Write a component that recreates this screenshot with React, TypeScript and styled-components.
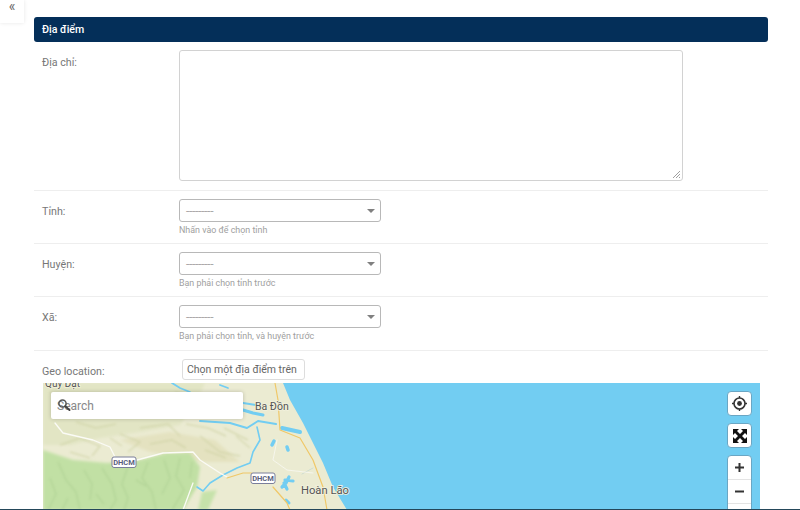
import React from "react";
import styled, { createGlobalStyle } from "styled-components";

const Global = createGlobalStyle`
  html, body { margin: 0; padding: 0; background: #fff; height: 510px; overflow: hidden; }
  body { font-family: Roboto, "Noto Sans", sans-serif; }
  * { box-sizing: border-box; }
`;

const Page = styled.div`
  position: relative;
  width: 800px;
  height: 510px;
  overflow: hidden;
  padding: 17px 32px 0 34px;
  &::after {
    content: "";
    position: absolute;
    left: 0;
    right: 0;
    bottom: 0;
    height: 1px;
    background: #24475a;
  }
`;

const Collapse = styled.div`
  position: absolute;
  left: 0;
  top: 0;
  width: 24px;
  height: 23px;
  background: #fff;
  box-shadow: 0 0 4px rgba(0, 0, 0, 0.1);
  color: #666;
  font-size: 14px;
  line-height: 12px;
  text-align: center;
`;

const SectionTitle = styled.h2`
  margin: 0;
  height: 25px;
  background: #042f59;
  color: #fff;
  border-radius: 3px;
  padding: 0 8px;
  font-size: 10.6px;
  font-weight: 500;
  line-height: 25px;
`;

const Row = styled.div<{ $h: number }>`
  display: flex;
  height: ${(p) => p.$h}px;
  padding-top: 8px;
  border-bottom: 1px solid #eee;
`;

const GeoRow = styled.div`
  display: flex;
  height: 32px;
  padding-top: 8px;
`;

const Label = styled.label`
  width: 137px;
  margin-left: 8px;
  padding-top: 6px;
  font-size: 10.7px;
  line-height: 14px;
  color: #777;
  flex: none;
`;

const Field = styled.div`
  display: flex;
  flex-direction: column;
`;

const TextArea = styled.div`
  position: relative;
  width: 504px;
  height: 131px;
  border: 1px solid #d2d2d2;
  border-radius: 3px;
`;

const Grip = styled.svg`
  position: absolute;
  right: 1px;
  bottom: 1px;
`;

const Select = styled.div`
  display: flex;
  align-items: center;
  justify-content: space-between;
  width: 202px;
  height: 23px;
  padding: 0 5px 0 6px;
  border: 1px solid #b8b8b8;
  border-radius: 3px;
  font-size: 12px;
  letter-spacing: -0.3px;
  color: #aaa;
`;

const Caret = styled.span`
  width: 0;
  height: 0;
  border-left: 4px solid transparent;
  border-right: 4px solid transparent;
  border-top: 4px solid #808080;
`;

const Help = styled.div`
  margin-top: 2px;
  font-size: 8.9px;
  line-height: 12px;
  color: #a0a0a0;
`;

const PickButton = styled.div`
  margin-left: 3px;
  height: 21px;
  padding: 0 7px 0 4px;
  border: 1px solid #ddd;
  border-radius: 3px;
  font-size: 10.5px;
  line-height: 19px;
  color: #666;
  white-space: nowrap;
`;

const MapFrame = styled.div`
  position: relative;
  width: 717px;
  height: 127px;
  margin-left: 9px;
  overflow: hidden;
  background: #72cdf2;
`;

const MapArt = styled.svg`
  display: block;
`;

const PlaceName = styled.text<{ $size: number }>`
  font-family: Roboto, sans-serif;
  font-size: ${(p) => p.$size}px;
  fill: #555;
  stroke: #f2f1dd;
  stroke-width: 1.6px;
  paint-order: stroke;
`;

const ShieldText = styled.text`
  font-family: Roboto, sans-serif;
  font-size: 7.5px;
  font-weight: 700;
  fill: #5a5f7c;
  text-anchor: middle;
`;

const SearchBox = styled.div`
  position: absolute;
  left: 8px;
  top: 9px;
  width: 192px;
  height: 27px;
  background: #fff;
  border-radius: 2px;
  box-shadow: 0 0 4px rgba(0, 0, 0, 0.2);
  padding-left: 6px;
  font-size: 12px;
  line-height: 28px;
  color: #888;
`;

const SearchIcon = styled.svg`
  position: absolute;
  left: 6px;
  top: 6px;
`;

const Control = styled.div<{ $top: number }>`
  position: absolute;
  left: 684px;
  top: ${(p) => p.$top}px;
  width: 25px;
  height: 25px;
  display: flex;
  align-items: center;
  justify-content: center;
  background: #fff;
  border: 1px solid #6aa6c4;
  border-radius: 4px;
`;

const ZoomStack = styled.div`
  position: absolute;
  left: 684px;
  top: 72px;
  width: 25px;
  height: 70px;
  background: #fff;
  border: 1px solid #6aa6c4;
  border-radius: 4px;
`;

const ZoomBtn = styled.div`
  height: 24px;
  display: flex;
  align-items: center;
  justify-content: center;
  border-bottom: 1px solid #e4e4e4;
`;

function MapDrawing() {
  return (
    <MapArt width="717" height="127" viewBox="43 383 717 127">
      <defs>
        <filter id="soft"><feGaussianBlur stdDeviation="1.8" /></filter>
        <filter id="mid"><feGaussianBlur stdDeviation="1.1" /></filter>
        <filter id="blur"><feGaussianBlur stdDeviation="0.35" /></filter>
      </defs>
      <rect x="43" y="383" width="717" height="127" fill="#72cdf2" />
      <path d="M43 383H283L290 400L303 423L313 443L323 463L333 487L347 510H43Z" fill="#ebebd2" />
      <path d="M43 383H205L195 405L180 425L140 432L100 438L70 445L43 445Z" fill="#e2e5c4" filter="url(#soft)" />
      <path d="M120 440L170 432L215 440L240 462L205 462L150 452Z" fill="#e4e2c0" filter="url(#soft)" />
      <path d="M43 450L73 460L107 463L140 460L167 453L190 453L200 467L197 487L183 510H43Z" fill="#c1e0a4" filter="url(#soft)" />
      <path d="M198 510L202 492L217 490L208 510Z" fill="#c6e2aa" filter="url(#soft)" />
      <g fill="none" stroke="#a8cb8e" strokeWidth="1.5" filter="url(#mid)" opacity="0.5">
        <path d="M58 462L66 480L76 492L80 510M84 470L92 484L90 500M102 468L112 484L116 500L110 510M128 466L122 484L128 498L124 510M148 462L142 478L152 492L156 510M164 460L170 478L162 494M180 458L176 476L184 490L172 510M192 462L190 478M50 478L56 494L48 510M136 480L146 486M96 494L104 504M68 498L62 510" />
      </g>
      <g fill="none" stroke="#cacf9f" strokeWidth="1.5" filter="url(#mid)" opacity="0.6">
        <path d="M50 392L62 402L56 418M76 422L96 428L116 424M60 445L80 438L100 446L92 456M120 434L140 442L128 452M140 428L168 424L180 436M150 444L172 440L186 448M186 424L208 428L226 436M200 436L220 452L240 456M224 428L248 440M236 436L250 448M205 450L226 458M175 392L196 398M70 452L90 458M110 438L122 446" />
      </g>
      {/* rivers */}
      <g fill="none" stroke="#72cdf2" strokeLinecap="round" strokeLinejoin="round" filter="url(#blur)">
        <path d="M172 383L180 388L190 392M220 385L228 388" strokeWidth="1.8" />
        <path d="M243 403L256 405" strokeWidth="2" />
        <path d="M243 410L253 413L263 415" strokeWidth="3" />
        <path d="M200 421L230 423L247 428L258 421L276 424" strokeWidth="2" />
        <path d="M257 427L260 440L253 452L250 463L237 468L223 475L210 483L203 491L197 487" strokeWidth="1.6" />
        <path d="M282 428L300 432" strokeWidth="4" />
        <path d="M274 441L272 445M287 447L288 450" strokeWidth="3.5" />
        <path d="M289 477L286 483L282 487M285 480L293 481M284 483L287 489" strokeWidth="3.2" />
        <path d="M286 500L289 503" strokeWidth="3" />
        <path d="M313 468L302 474" strokeWidth="1" stroke="#cfdcd0" />
      </g>
      {/* roads */}
      <g fill="none" strokeLinecap="round" strokeLinejoin="round" filter="url(#blur)">
        <path d="M55 423L63 433L93 440L110 447L115 457M137 460L163 453L193 452L200 460L220 473L227 477M193 483L183 510" stroke="#fbfbf6" strokeWidth="1.3" />
        <path d="M277 440L273 460L287 470L313 473" stroke="#f6f6ec" strokeWidth="1" />
        <path d="M275 383L278 400L280 430L300 438L313 460L323 487L327 510" stroke="#f0c868" strokeWidth="1.2" />
        <path d="M227 478L243 473L252 473" stroke="#f0c868" strokeWidth="1.2" />
        <path d="M273 487L287 503L290 510" stroke="#f0c868" strokeWidth="1.2" />
      </g>
      <PlaceName x="45" y="387" $size={10}>Quy Đạt</PlaceName>
      <PlaceName x="255" y="410" $size={10.5}>Ba Đồn</PlaceName>
      <PlaceName x="301" y="494" $size={11.2}>Hoàn Lão</PlaceName>
      <rect x="112" y="457" width="24" height="10.5" rx="2" fill="#fff" stroke="#7a7e9a" strokeWidth="1" />
      <ShieldText x="124" y="465">DHCM</ShieldText>
      <rect x="251" y="473" width="24" height="10.5" rx="2" fill="#fff" stroke="#7a7e9a" strokeWidth="1" />
      <ShieldText x="263" y="481">DHCM</ShieldText>
    </MapArt>
  );
}

export default function App() {
  const rows = [
    { label: "Tỉnh:", help: "Nhấn vào để chọn tỉnh", h: 53 },
    { label: "Huyện:", help: "Bạn phải chọn tỉnh trước", h: 53 },
    { label: "Xã:", help: "Bạn phải chọn tỉnh, và huyện trước", h: 54 },
  ];
  return (
    <Page>
      <Global />
      <Collapse>«</Collapse>
      <SectionTitle>Địa điểm</SectionTitle>
      <Row $h={149}>
        <Label>Địa chỉ:</Label>
        <Field>
          <TextArea>
            <Grip width="11" height="11" viewBox="0 0 11 11">
              <path d="M3 10L10 3M6 10L10 6M9 10L10 9" stroke="#888" strokeWidth="0.8" fill="none" />
            </Grip>
          </TextArea>
        </Field>
      </Row>
      {rows.map((r) => (
        <Row $h={r.h} key={r.label}>
          <Label>{r.label}</Label>
          <Field>
            <Select>
              <span>---------</span>
              <Caret />
            </Select>
            <Help>{r.help}</Help>
          </Field>
        </Row>
      ))}
      <GeoRow>
        <Label>Geo location:</Label>
        <PickButton>Chọn một địa điểm trên</PickButton>
      </GeoRow>
      <MapFrame>
        <MapDrawing />
        <SearchBox>
          Search
          <SearchIcon width="14" height="14" viewBox="0 0 14 14">
            <circle cx="5.5" cy="5.5" r="3.6" fill="none" stroke="#555" strokeWidth="1.5" />
            <path d="M8.2 8.2L12.5 12" stroke="#444" strokeWidth="2" strokeLinecap="round" />
          </SearchIcon>
        </SearchBox>
        <Control $top={8}>
          <svg width="17" height="17" viewBox="0 0 17 17">
            <circle cx="8.5" cy="8.5" r="5.5" fill="none" stroke="#333" strokeWidth="1.6" />
            <circle cx="8.5" cy="8.5" r="2.4" fill="#333" />
            <path d="M8.5 1V3M8.5 14V16M1 8.5H3M14 8.5H16" stroke="#333" strokeWidth="1.4" />
          </svg>
        </Control>
        <Control $top={40}>
          <svg width="16" height="16" viewBox="0 0 16 16">
            <path d="M1 1H7L5 3L8 6L11 3L9 1H15V7L13 5L10 8L13 11L15 9V15H9L11 13L8 10L5 13L7 15H1V9L3 11L6 8L3 5L1 7Z" fill="#111" />
          </svg>
        </Control>
        <ZoomStack>
          <ZoomBtn>
            <svg width="11" height="11" viewBox="0 0 11 11"><path d="M5.5 1V10M1 5.5H10" stroke="#333" strokeWidth="2" /></svg>
          </ZoomBtn>
          <ZoomBtn>
            <svg width="11" height="11" viewBox="0 0 11 11"><path d="M1 5.5H10" stroke="#333" strokeWidth="2" /></svg>
          </ZoomBtn>
        </ZoomStack>
      </MapFrame>
    </Page>
  );
}
